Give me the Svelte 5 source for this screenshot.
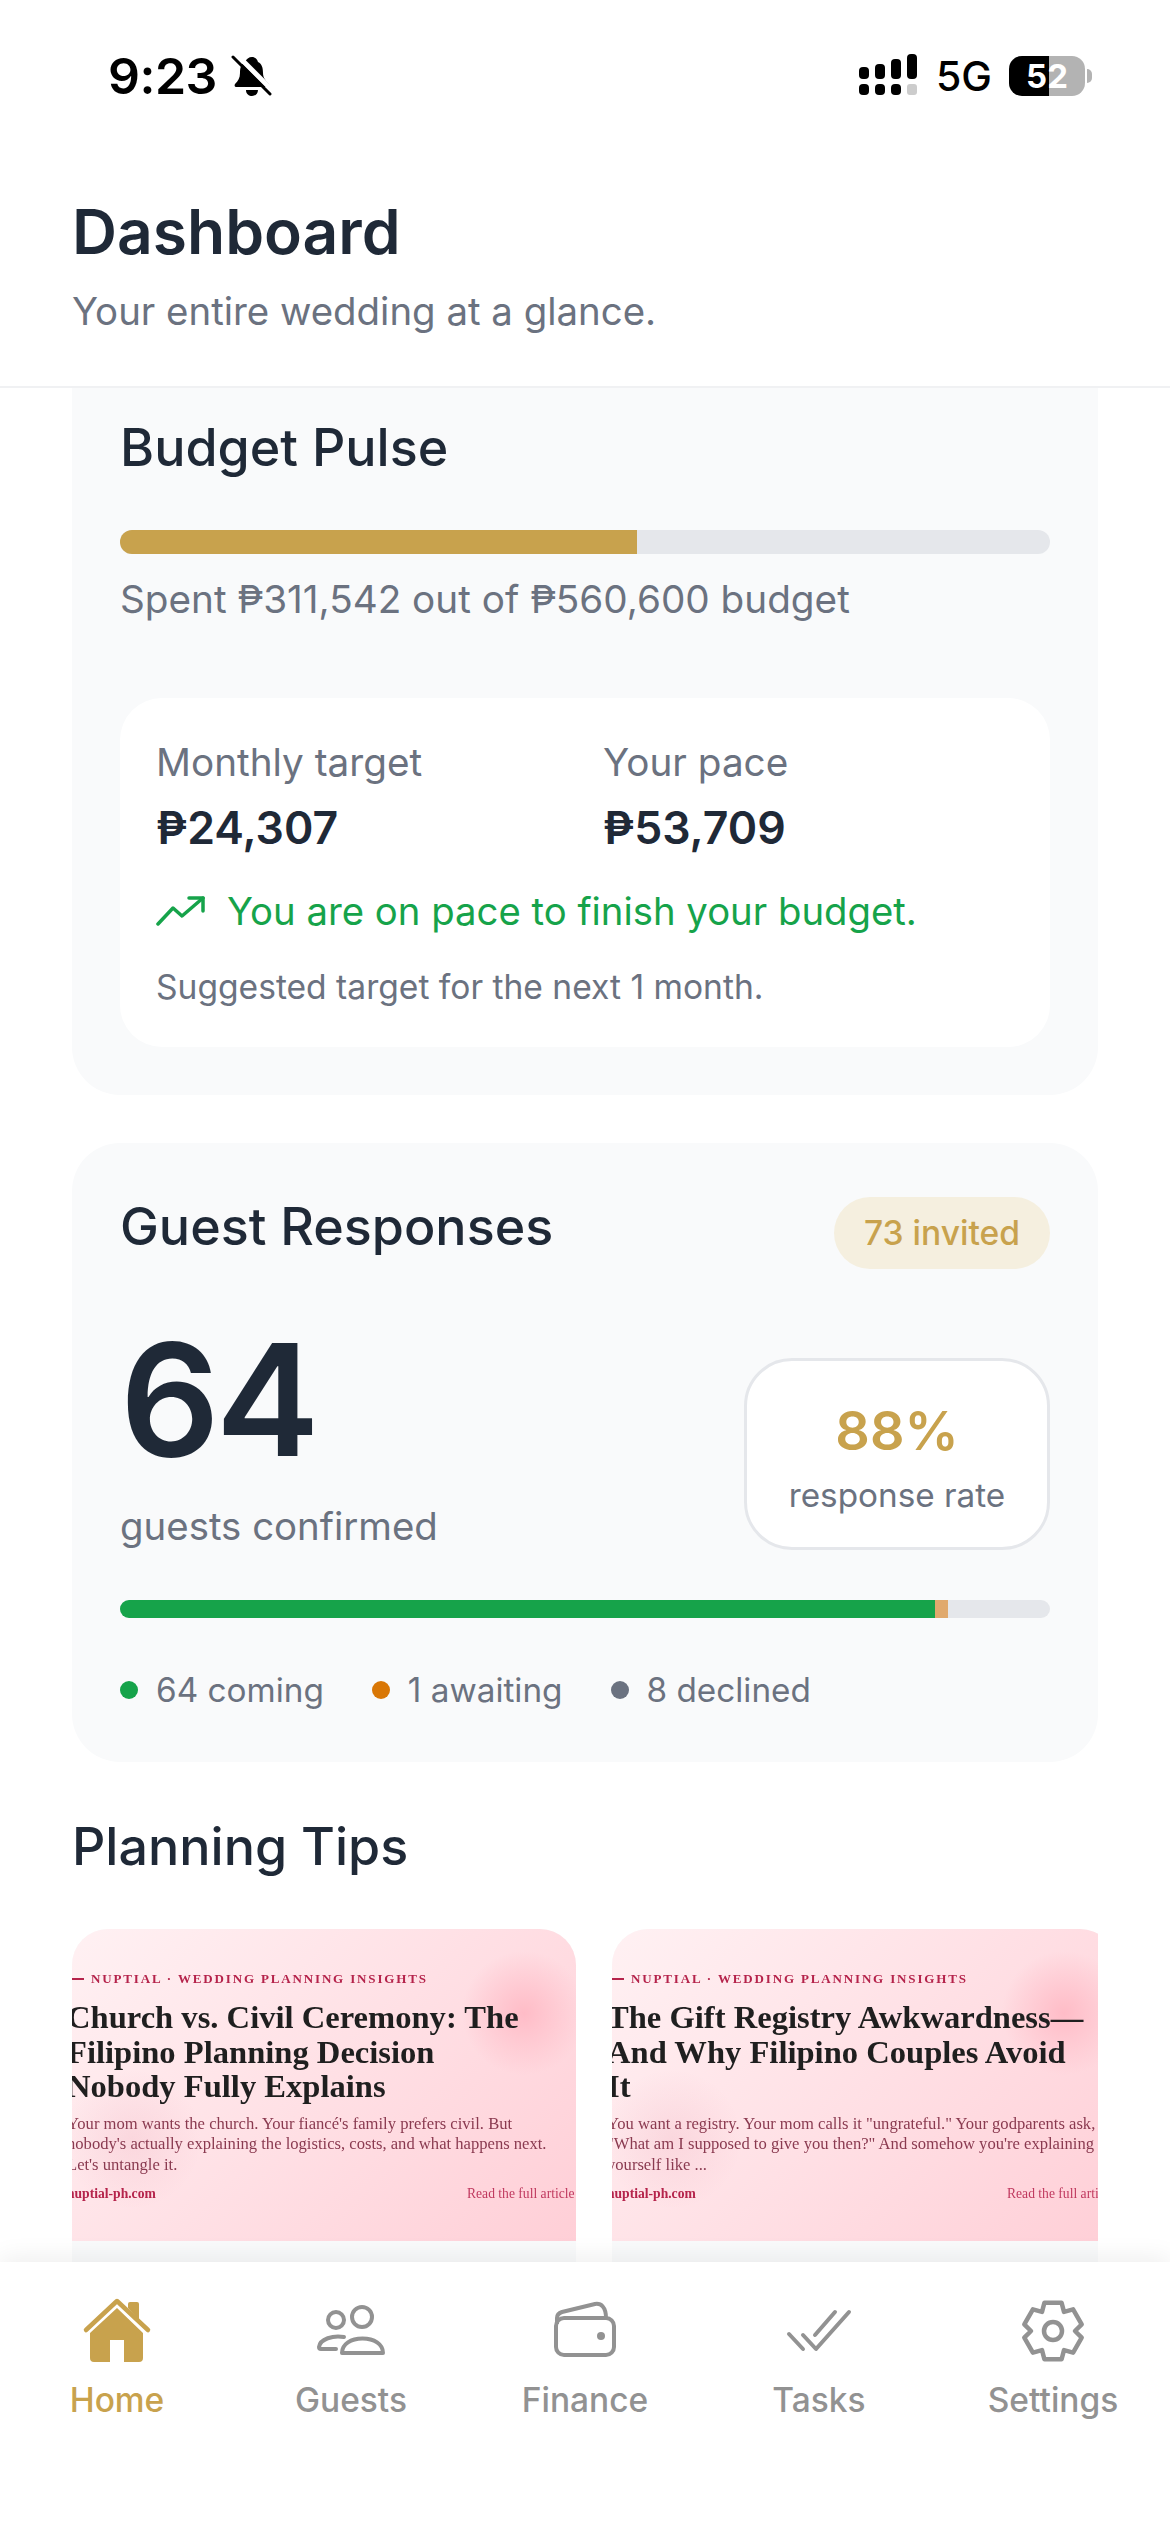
<script>
  const articles = [
    {
      lines: ['Church vs. Civil Ceremony: The', 'Filipino Planning Decision', 'Nobody Fully Explains'],
      desc: ["Your mom wants the church. Your fiancé's family prefers civil. But", "nobody's actually explaining the logistics, costs, and what happens next.", "Let's untangle it."]
    },
    {
      lines: ['The Gift Registry Awkwardness—', 'And Why Filipino Couples Avoid', 'It'],
      desc: ['You want a registry. Your mom calls it "ungrateful." Your godparents ask,', '"What am I supposed to give you then?" And somehow you\'re explaining', 'yourself like ...']
    }
  ];

  const tabs = ['Home', 'Guests', 'Finance', 'Tasks', 'Settings'];
  const legend = [
    { label: '64 coming', color: '#16a34a' },
    { label: '1 awaiting', color: '#d97706' },
    { label: '8 declined', color: '#6b7280' }
  ];

  // six toothed gear, tooth tips at R 29.5 and valleys at R 22
  function gearPath() {
    const pt = (deg, r) => {
      const a = (deg * Math.PI) / 180;
      return `${(36 + r * Math.cos(a)).toFixed(1)} ${(39 - r * Math.sin(a)).toFixed(1)}`;
    };
    let d = '';
    for (let k = 0; k < 6; k++) {
      const a = 90 - 60 * k;
      d += `${k === 0 ? 'M' : 'L'}${pt(a + 30, 22)} L${pt(a + 17, 29.5)} L${pt(a - 17, 29.5)} `;
    }
    return d + 'Z';
  }
</script>

<div class="page">
  <div class="status">
    <div class="status-left">
      <span class="time">9:23</span>
      <svg class="bell" width="42" height="44" viewBox="0 0 42 44">
        <path d="M21 3c3 0 5 2 6 5 4 2 5 6 5 11 0 5 3 8 6 11 1 2 0 3-2 3H6c-2 0-3-1-2-3 3-3 5-6 5-11 0-5 1-9 5-11 1-3 4-5 7-5z" fill="#000"/>
        <path d="M15 36h12c0 4-3 6-6 6s-6-2-6-6z" fill="#000"/>
        <path d="M5 0l38 38" stroke="#fff" stroke-width="5"/>
        <path d="M2 3l37 37" stroke="#000" stroke-width="3" stroke-linecap="round"/>
      </svg>
    </div>
    <div class="status-right">
      <svg width="60" height="44" viewBox="0 0 60 44">
        <g fill="#000">
          <rect x="0" y="13" width="10" height="12" rx="4"/>
          <rect x="16" y="10" width="10" height="15" rx="4"/>
          <rect x="32" y="5" width="10" height="20" rx="4"/>
          <rect x="48" y="0" width="10" height="25" rx="4"/>
          <rect x="0" y="30" width="10" height="11" rx="4"/>
          <rect x="16" y="30" width="10" height="11" rx="4"/>
          <rect x="32" y="30" width="10" height="11" rx="4"/>
        </g>
        <rect x="48" y="30" width="10" height="11" rx="3" fill="#ccc"/>
      </svg>
      <span class="net">5G</span>
      <div class="battery">
        <span class="battery-num">52</span>
      </div>
    </div>
  </div>

  <header class="header">
    <h1>Dashboard</h1>
    <p>Your entire wedding at a glance.</p>
  </header>

  <main class="scroll">
    <section class="card budget">
      <h2>Budget Pulse</h2>
      <div class="bar big"><div class="fill gold" style="width: 55.6%"></div></div>
      <p class="spent">Spent ₱311,542 out of ₱560,600 budget</p>
      <div class="inner">
        <div class="cols">
          <div>
            <div class="col-label">Monthly target</div>
            <div class="col-value">₱24,307</div>
          </div>
          <div>
            <div class="col-label">Your pace</div>
            <div class="col-value">₱53,709</div>
          </div>
        </div>
        <div class="pace">
          <svg width="50" height="30" viewBox="0 0 50 30" fill="none" stroke="#16a34a" stroke-width="3.500" stroke-linecap="round" stroke-linejoin="round">
            <path d="M2 28L17 12l9 8L47 2"/>
            <path d="M33 2h14v13"/>
          </svg>
          <span>You are on pace to finish your budget.</span>
        </div>
        <p class="suggest">Suggested target for the next 1 month.</p>
      </div>
    </section>

    <section class="card guests">
      <div class="guests-head">
        <h2>Guest Responses</h2>
        <span class="pill">73 invited</span>
      </div>
      <div class="guests-main">
        <div>
          <div class="big-num">64</div>
          <div class="big-label">guests confirmed</div>
        </div>
        <div class="rate">
          <div class="rate-num">88%</div>
          <div class="rate-label">response rate</div>
        </div>
      </div>
      <div class="bar small">
        <div class="fill green" style="width: 87.67%"></div>
        <div class="fill amber" style="width: 1.37%"></div>
      </div>
      <div class="legend">
        {#each legend as item}
          <div class="legend-item">
            <span class="dot" style="background: {item.color}"></span>
            <span>{item.label}</span>
          </div>
        {/each}
      </div>
    </section>

    <h2 class="tips-title">Planning Tips</h2>
    <div class="tips">
      {#each articles as a}
        <article class="tip">
          <div class="tip-img">
            <div class="tip-inner">
              <div class="eyebrow"><span class="dash"></span>NUPTIAL · WEDDING PLANNING INSIGHTS</div>
              <div class="tip-title">
                {#each a.lines as l}<div>{l}</div>{/each}
              </div>
              <div class="tip-desc">
                {#each a.desc as l}<div>{l}</div>{/each}
              </div>
              <div class="tip-foot">
                <b>nuptial-ph.com</b>
                <span>Read the full article →</span>
              </div>
            </div>
          </div>
        </article>
      {/each}
    </div>
  </main>

  <nav class="tabbar">
    {#each tabs as tab, i}
      <div class="tab" class:active={i === 0}>
        <div class="tab-icon">
          {#if i === 0}
            <svg width="72" height="72" viewBox="0 0 72 72" fill="#c8a24d">
              <path d="M36 16L9 41v25a4 4 0 0 0 4 4h16V48h14v22h15a4 4 0 0 0 4-4V41z"/>
              <path d="M47 16v-4a2 2 0 0 1 2-2h7a2 2 0 0 1 2 2v16z"/>
              <path d="M5 38L36 9l31 29" fill="none" stroke="#c8a24d" stroke-width="4.500" stroke-linecap="round" stroke-linejoin="round"/>
            </svg>
          {:else if i === 1}
            <svg width="72" height="72" viewBox="0 0 72 72" fill="none" stroke="#929292" stroke-width="4" stroke-linecap="round" stroke-linejoin="round">
              <circle cx="47" cy="25" r="10"/>
              <circle cx="21" cy="28" r="8"/>
              <path d="M27 61c0-9 9-14.500 20.500-14.500S68 52 68 61z"/>
              <path d="M29 45C18 43 5 47 4 55q0 2 2 2h15"/>
            </svg>
          {:else if i === 2}
            <svg width="72" height="72" viewBox="0 0 72 72" fill="none" stroke="#929292" stroke-width="4" stroke-linejoin="round">
              <rect x="7" y="26" width="58" height="37" rx="8"/>
              <path d="M8 32v-6c0-3 2-5 5-6l33-8c6-1 11 3 11 14"/>
              <circle cx="52" cy="44" r="4" fill="#929292" stroke="none"/>
            </svg>
          {:else if i === 3}
            <svg width="72" height="72" viewBox="0 0 72 72" fill="none" stroke="#929292" stroke-width="4" stroke-linecap="round" stroke-linejoin="round">
              <path d="M6 42l14 15"/>
              <path d="M20 43l13 14 33-37"/>
              <path d="M32 43l20-23"/>
            </svg>
          {:else}
            <svg width="72" height="72" viewBox="0 0 72 72" fill="none" stroke="#929292" stroke-width="4.500" stroke-linejoin="round">
              <path d={gearPath()}/>
              <circle cx="36" cy="39" r="9"/>
            </svg>
          {/if}
        </div>
        <span class="tab-label">{tab}</span>
      </div>
    {/each}
  </nav>
</div>

<style>
  :global(body) {
    margin: 0;
    background: #fff;
  }

  .page {
    width: 1170px;
    height: 2532px;
    display: flex;
    flex-direction: column;
    overflow: hidden;
    font-family: Inter, "Liberation Sans", sans-serif;
    color: #1f2937;
    background: #fff;
  }

  .status {
    height: 158px;
    flex: none;
    display: flex;
    justify-content: space-between;
    padding: 48px 85px 0 108px;
    box-sizing: border-box;
  }

  .status-left {
    display: flex;
    align-items: center;
    gap: 14px;
    height: 56px;
  }

  .time {
    font-size: 50px;
    font-weight: 600;
    color: #000;
    letter-spacing: -0.5px;
  }

  .status-right {
    display: flex;
    align-items: center;
    gap: 17px;
    height: 56px;
  }

  .net {
    font-size: 41px;
    font-weight: 500;
    color: #000;
  }

  .battery {
    width: 76px;
    height: 40px;
    border-radius: 13px;
    background: linear-gradient(90deg, #000 0 53%, #b3b3b3 53% 100%);
    display: flex;
    align-items: center;
    justify-content: center;
    position: relative;
  }

  .battery::after {
    content: "";
    position: absolute;
    right: -7px;
    top: 13px;
    width: 5px;
    height: 14px;
    border-radius: 0 6px 6px 0;
    background: #b3b3b3;
  }

  .battery-num {
    color: #fff;
    font-size: 33px;
    font-weight: 700;
  }

  .header {
    flex: none;
    height: 230px;
    box-sizing: border-box;
    padding: 38px 72px 0 72px;
    border-bottom: 2px solid #f0f1f3;
  }

  h1 {
    margin: 0;
    font-size: 62.300px;
    line-height: 72px;
    font-weight: 600;
  }

  .header p {
    margin: 18px 0 0;
    font-size: 38.400px;
    line-height: 50px;
    color: #6b7280;
  }

  .scroll {
    flex: 1;
    min-height: 0;
    overflow: hidden;
    padding: 0 72px;
  }

  .card {
    background: #f9fafb;
    border-radius: 48px;
    padding: 48px;
    margin-bottom: 48px;
  }

  .budget {
    border-radius: 0 0 48px 48px;
    padding-top: 30px;
  }

  h2 {
    margin: 0;
    font-size: 52px;
    line-height: 60px;
    font-weight: 500;
  }

  .bar {
    background: #e5e7eb;
    border-radius: 12px;
    overflow: hidden;
    display: flex;
  }

  .bar.big {
    height: 24px;
    margin-top: 52px;
  }

  .bar.small {
    height: 18px;
    margin-top: 50px;
  }

  .fill {
    height: 100%;
  }

  .gold { background: #c8a24d; }
  .green { background: #16a34a; }
  .amber { background: #e0a96d; }

  .spent {
    margin: 21px 0 0;
    font-size: 38.700px;
    line-height: 48px;
    color: #6b7280;
  }

  .inner {
    margin-top: 75px;
    background: #fff;
    border-radius: 42px;
    padding: 40px 36px 36px;
    height: 349px;
    box-sizing: border-box;
  }

  .cols {
    display: grid;
    grid-template-columns: 1fr 1fr;
    gap: 36px;
  }

  .col-label {
    font-size: 38.700px;
    line-height: 48px;
    color: #6b7280;
  }

  .col-value {
    margin-top: 15px;
    font-size: 44.600px;
    line-height: 54px;
    font-weight: 600;
  }

  .pace {
    display: flex;
    align-items: center;
    gap: 21px;
    margin-top: 28px;
    color: #16a34a;
    font-size: 38.300px;
    line-height: 56px;
  }

  .suggest {
    margin: 26px 0 0;
    font-size: 33.600px;
    line-height: 44px;
    color: #6b7280;
  }

  .guests-head {
    display: flex;
    justify-content: space-between;
    align-items: flex-start;
  }

  .pill {
    height: 72px;
    line-height: 72px;
    padding: 0 30px;
    border-radius: 36px;
    background: #f5efdf;
    color: #c8a24d;
    font-size: 33.600px;
    font-weight: 500;
  }

  .guests {
    padding-top: 54px;
  }

  .guests-main {
    display: flex;
    justify-content: space-between;
    align-items: flex-end;
    margin-top: 41px;
  }

  .big-num {
    font-size: 156px;
    line-height: 180px;
    font-weight: 600;
    letter-spacing: -4px;
  }

  .big-label {
    font-size: 38.400px;
    line-height: 48px;
    color: #6b7280;
    margin-top: 12px;
  }

  .rate {
    width: 306px;
    height: 192px;
    box-sizing: border-box;
    border: 3px solid #e5e7eb;
    border-radius: 48px;
    background: #fff;
    text-align: center;
    padding-top: 37px;
  }

  .rate-num {
    font-size: 54px;
    line-height: 66px;
    font-weight: 600;
    color: #c8a24d;
  }

  .rate-label {
    margin-top: 9px;
    font-size: 33.300px;
    line-height: 44px;
    color: #6b7280;
  }

  .legend {
    display: flex;
    gap: 48px;
    margin-top: 48px;
  }

  .legend-item {
    display: flex;
    align-items: center;
    gap: 18px;
    font-size: 33.300px;
    line-height: 48px;
    color: #6b7280;
  }

  .dot {
    width: 18px;
    height: 18px;
    border-radius: 50%;
  }

  .tips-title {
    margin-top: 0;
    padding-top: 7px;
  }

  .tips {
    display: flex;
    gap: 36px;
    margin-top: 52px;
    overflow: hidden;
  }

  .tip {
    flex: none;
    width: 504px;
    height: 360px;
    border-radius: 36px 36px 0 0;
    overflow: hidden;
    background: #f9fafb;
  }

  .tip-img {
    height: 312px;
    overflow: hidden;
    background:
      radial-gradient(circle 62px at 452px 84px, #ffbcc7 0%, rgba(255, 188, 199, 0) 100%),
      radial-gradient(circle 70px at 60px 210px, rgba(200, 40, 80, 0.08) 0%, rgba(200, 40, 80, 0) 100%),
      linear-gradient(135deg, #fff1f3 0%, #ffe0e5 50%, #ffcfd7 100%);
  }

  .tip-inner {
    width: 524px;
    margin-left: -5px;
    padding-top: 42px;
    font-family: "Liberation Serif", serif;
    filter: blur(0.35px);
  }

  .eyebrow {
    display: flex;
    align-items: center;
    gap: 7px;
    font-size: 13px;
    line-height: 16px;
    font-weight: 700;
    letter-spacing: 1.850px;
    color: #b5234b;
    white-space: nowrap;
  }

  .dash {
    width: 17px;
    height: 2px;
    background: #b5234b;
  }

  .tip-title {
    margin-top: 13px;
    font-size: 32.600px;
    line-height: 34.500px;
    font-weight: 700;
    color: #1f1f1f;
    white-space: nowrap;
  }

  .tip-desc {
    margin-top: 10px;
    font-size: 16.600px;
    line-height: 20.700px;
    color: #8a3a50;
    white-space: nowrap;
  }

  .tip-foot {
    display: flex;
    margin-top: 8px;
    font-size: 13.600px;
    line-height: 20px;
    color: #b5234b;
    white-space: nowrap;
  }

  .tip-foot b {
    flex: none;
    width: 400px;
  }

  .tip-foot span {
    color: #c0395f;
  }

  .tabbar {
    flex: none;
    height: 270px;
    background: #fff;
    display: grid;
    grid-template-columns: repeat(5, 1fr);
    box-shadow: 0 -4px 24px rgba(0, 0, 0, 0.07);
    position: relative;
    padding-top: 30px;
    box-sizing: border-box;
    align-items: start;
  }

  .tab {
    display: flex;
    flex-direction: column;
    align-items: center;
    color: #929292;
  }

  .tab.active {
    color: #c8a24d;
  }

  .tab-icon {
    height: 72px;
  }

  .tab-label {
    margin-top: 14px;
    font-size: 33.500px;
    line-height: 44px;
    font-weight: 500;
  }
</style>
